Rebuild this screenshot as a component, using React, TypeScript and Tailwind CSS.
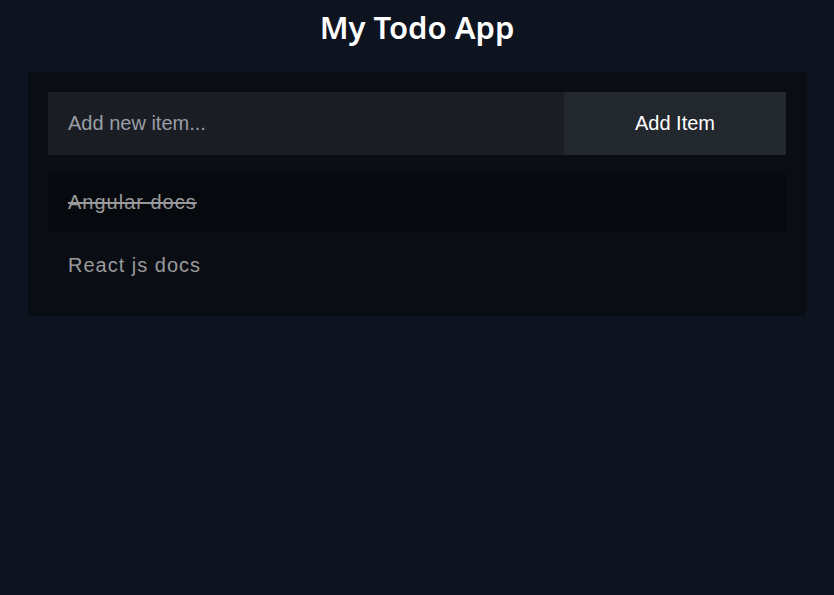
import { useState } from "react";

type Todo = { id: number; text: string; done: boolean };

export default function App() {
  const [todos, setTodos] = useState<Todo[]>([
    { id: 1, text: "Angular docs", done: true },
    { id: 2, text: "React js docs", done: false },
  ]);
  const [value, setValue] = useState("");

  const addItem = () => {
    if (!value.trim()) return;
    setTodos([...todos, { id: Date.now(), text: value.trim(), done: false }]);
    setValue("");
  };

  return (
    <div className="min-h-screen bg-[#0d1420] font-[family-name:'Liberation_Sans',Arial,sans-serif]">
      <h1 className="pt-[6px] text-center text-[31px] font-semibold leading-[42px] text-white font-[family-name:'Noto_Sans',sans-serif]">
        My Todo App
      </h1>

      <div className="mx-[28px] mt-[24px] bg-[#0a0d14] px-5 pt-5 pb-[21px]">
        {/* Input row */}
        <div className="flex h-[63px]">
          <input
            value={value}
            onChange={(e) => setValue(e.target.value)}
            onKeyDown={(e) => e.key === "Enter" && addItem()}
            placeholder="Add new item..."
            className="flex-1 bg-[#1a1d24] px-5 pb-[2px] text-[20px] text-gray-200 placeholder:text-[#9a9ea6] outline-none"
          />
          <button
            onClick={addItem}
            className="w-[222px] bg-[#23272e] pb-[2px] text-[20px] text-white"
          >
            Add Item
          </button>
        </div>

        {/* List */}
        <ul className="mt-[17px] flex flex-col gap-[3px]">
          {todos.map((todo) => (
            <li
              key={todo.id}
              onClick={() =>
                setTodos(todos.map((t) => (t.id === todo.id ? { ...t, done: !t.done } : t)))
              }
              className={`flex h-[60px] cursor-pointer items-center px-5 text-[20px] tracking-[1px] text-[#9a9a9a] ${
                todo.done ? "bg-[#06090e] line-through" : ""
              }`}
            >
              {todo.text}
            </li>
          ))}
        </ul>
      </div>
    </div>
  );
}
